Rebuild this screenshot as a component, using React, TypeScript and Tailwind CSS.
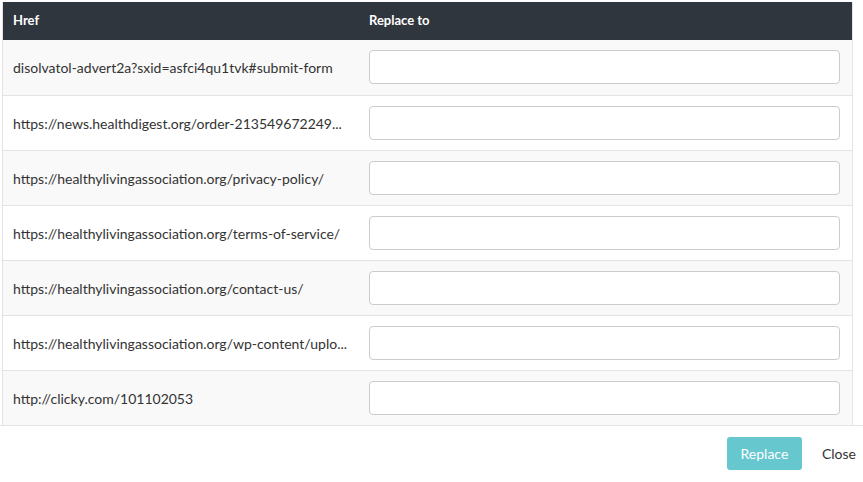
const rows = [
  "disolvatol-advert2a?sxid=asfci4qu1tvk#submit-form",
  "https://news.healthdigest.org/order-213549672249...",
  "https://healthylivingassociation.org/privacy-policy/",
  "https://healthylivingassociation.org/terms-of-service/",
  "https://healthylivingassociation.org/contact-us/",
  "https://healthylivingassociation.org/wp-content/uplo...",
  "http://clicky.com/101102053",
];

export default function App() {
  return (
    <div
      className="w-[863px] h-[482px] bg-white text-[#333] overflow-hidden"
      style={{ fontFamily: "Lato, 'Liberation Sans', sans-serif" }}
    >
      {/* Table */}
      <div className="pt-[2px] pl-[2px] w-[853px]">
        <div className="border-l border-r border-[#e3e3e3]">
          <table className="w-full table-fixed border-collapse text-[14px]">
            <colgroup>
              <col className="w-[356px]" />
              <col />
            </colgroup>
            <thead>
              <tr className="bg-[#2f363e] text-white h-[38px] text-[13px]">
                <th className="text-left font-bold px-[10px]">Href</th>
                <th className="text-left font-bold px-[10px]">Replace to</th>
              </tr>
            </thead>
            <tbody>
              {rows.map((href, i) => (
                <tr
                  key={i}
                  className={`h-[55px] ${i > 0 ? "border-t border-[#e3e3e3]" : ""} ${
                    i % 2 === 0 ? "bg-[#f9f9f9]" : "bg-white"
                  }`}
                >
                  <td className="pl-[10px] pr-[6px] pt-[1px] whitespace-nowrap overflow-hidden">{href}</td>
                  <td className="pl-[10px] pr-[12px]">
                    <input
                      type="text"
                      className="block w-full h-[34px] bg-white border border-[#ccc] rounded-[4px] px-3 outline-none"
                    />
                  </td>
                </tr>
              ))}
            </tbody>
          </table>
        </div>
      </div>

      {/* Footer */}
      <div className="border-t border-[#e3e3e3] h-[56px] flex items-center justify-end pr-[7px] gap-[20px]">
        <button className="h-[33px] w-[75px] rounded-[3px] bg-[#66c7cf] text-white text-[14px]">
          Replace
        </button>
        <button className="text-[14px] text-[#333]">Close</button>
      </div>
    </div>
  );
}
